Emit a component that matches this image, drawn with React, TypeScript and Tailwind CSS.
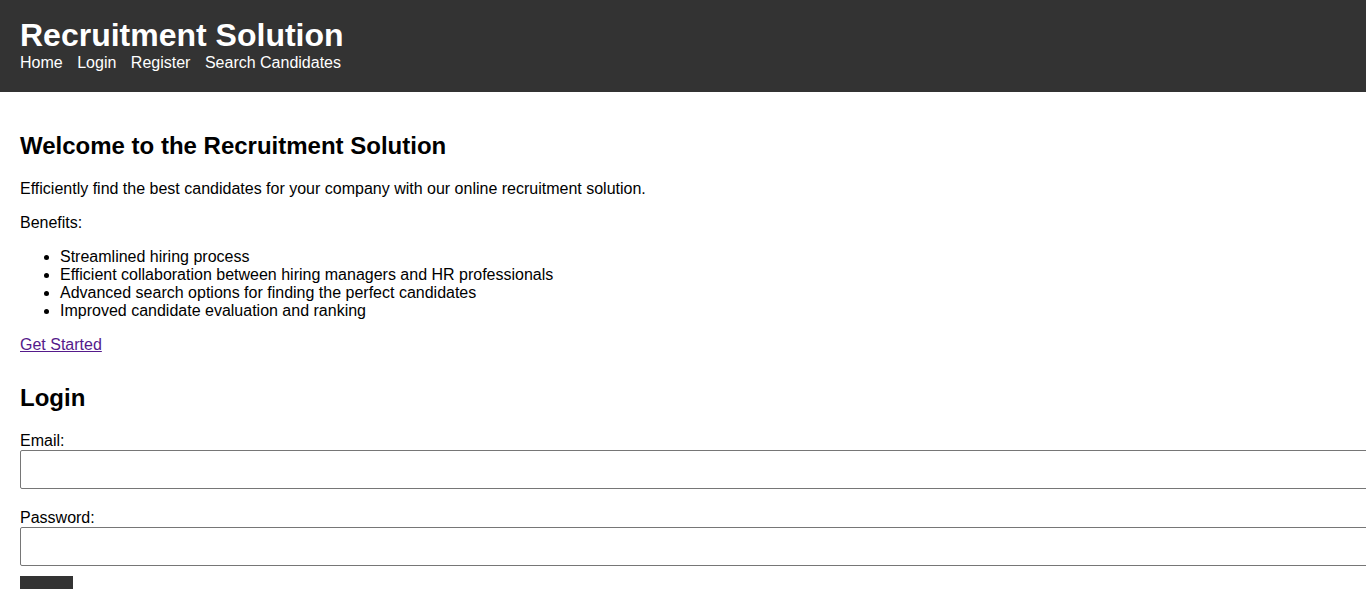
export default function App() {
  const benefits = [
    "Streamlined hiring process",
    "Efficient collaboration between hiring managers and HR professionals",
    "Advanced search options for finding the perfect candidates",
    "Improved candidate evaluation and ranking",
  ];

  return (
    <div className="min-h-screen bg-white text-black font-['Liberation_Sans',Arial,sans-serif] leading-[normal] overflow-x-hidden">
      <header className="h-[92px] bg-[#333333] px-5 pt-[17px] pb-5 text-white">
        <h1 className="text-[32px] font-bold leading-[normal]">Recruitment Solution</h1>
        <nav className="flex gap-[14.5px] text-[16px] leading-[normal]">
          <a href="#" className="text-white">Home</a>
          <a href="#" className="text-white">Login</a>
          <a href="#" className="text-white">Register</a>
          <a href="#" className="text-white">Search Candidates</a>
        </nav>
      </header>

      <main className="px-5 pt-5 pb-10 text-[16px]">
        <section>
          <h2 className="my-5 text-[24px] font-bold leading-[normal]">Welcome to the Recruitment Solution</h2>
          <p className="mb-4">Efficiently find the best candidates for your company with our online recruitment solution.</p>
          <p className="mb-4">Benefits:</p>
          <ul className="mb-4 list-disc pl-10">
            {benefits.map((b) => (
              <li key={b}>{b}</li>
            ))}
          </ul>
          <p>
            <a href="#" className="text-[#551a8b] underline">Get Started</a>
          </p>
        </section>

        <section className="mt-[30px]">
          <h2 className="mb-5 text-[24px] font-bold leading-[normal]">Login</h2>
          <form>
            <label className="block">Email:</label>
            <input
              type="email"
              className="block h-[39px] w-[calc(100%+22px)] rounded-[2px] border border-[#767676] px-[10px]"
            />
            <label className="mt-5 block">Password:</label>
            <input
              type="password"
              className="block h-[39px] w-[calc(100%+22px)] rounded-[2px] border border-[#767676] px-[10px]"
            />
            <button type="button" className="mt-[10px] bg-[#333333] px-[10px] py-[10px] text-[13.33px] text-white">
              Login
            </button>
          </form>
        </section>

        <section className="mt-7">
          <h2 className="mb-5 text-[24px] font-bold leading-[normal]">Register</h2>
          <form>
            <label className="block">Name:</label>
            <input
              type="text"
              className="block h-[39px] w-[calc(100%+22px)] rounded-[2px] border border-[#767676] px-[10px]"
            />
            <label className="mt-5 block">Email:</label>
            <input
              type="email"
              className="block h-[39px] w-[calc(100%+22px)] rounded-[2px] border border-[#767676] px-[10px]"
            />
            <button type="button" className="mt-[10px] bg-[#333333] px-[10px] py-[10px] text-[13.33px] text-white">
              Register
            </button>
          </form>
        </section>
      </main>
    </div>
  );
}
